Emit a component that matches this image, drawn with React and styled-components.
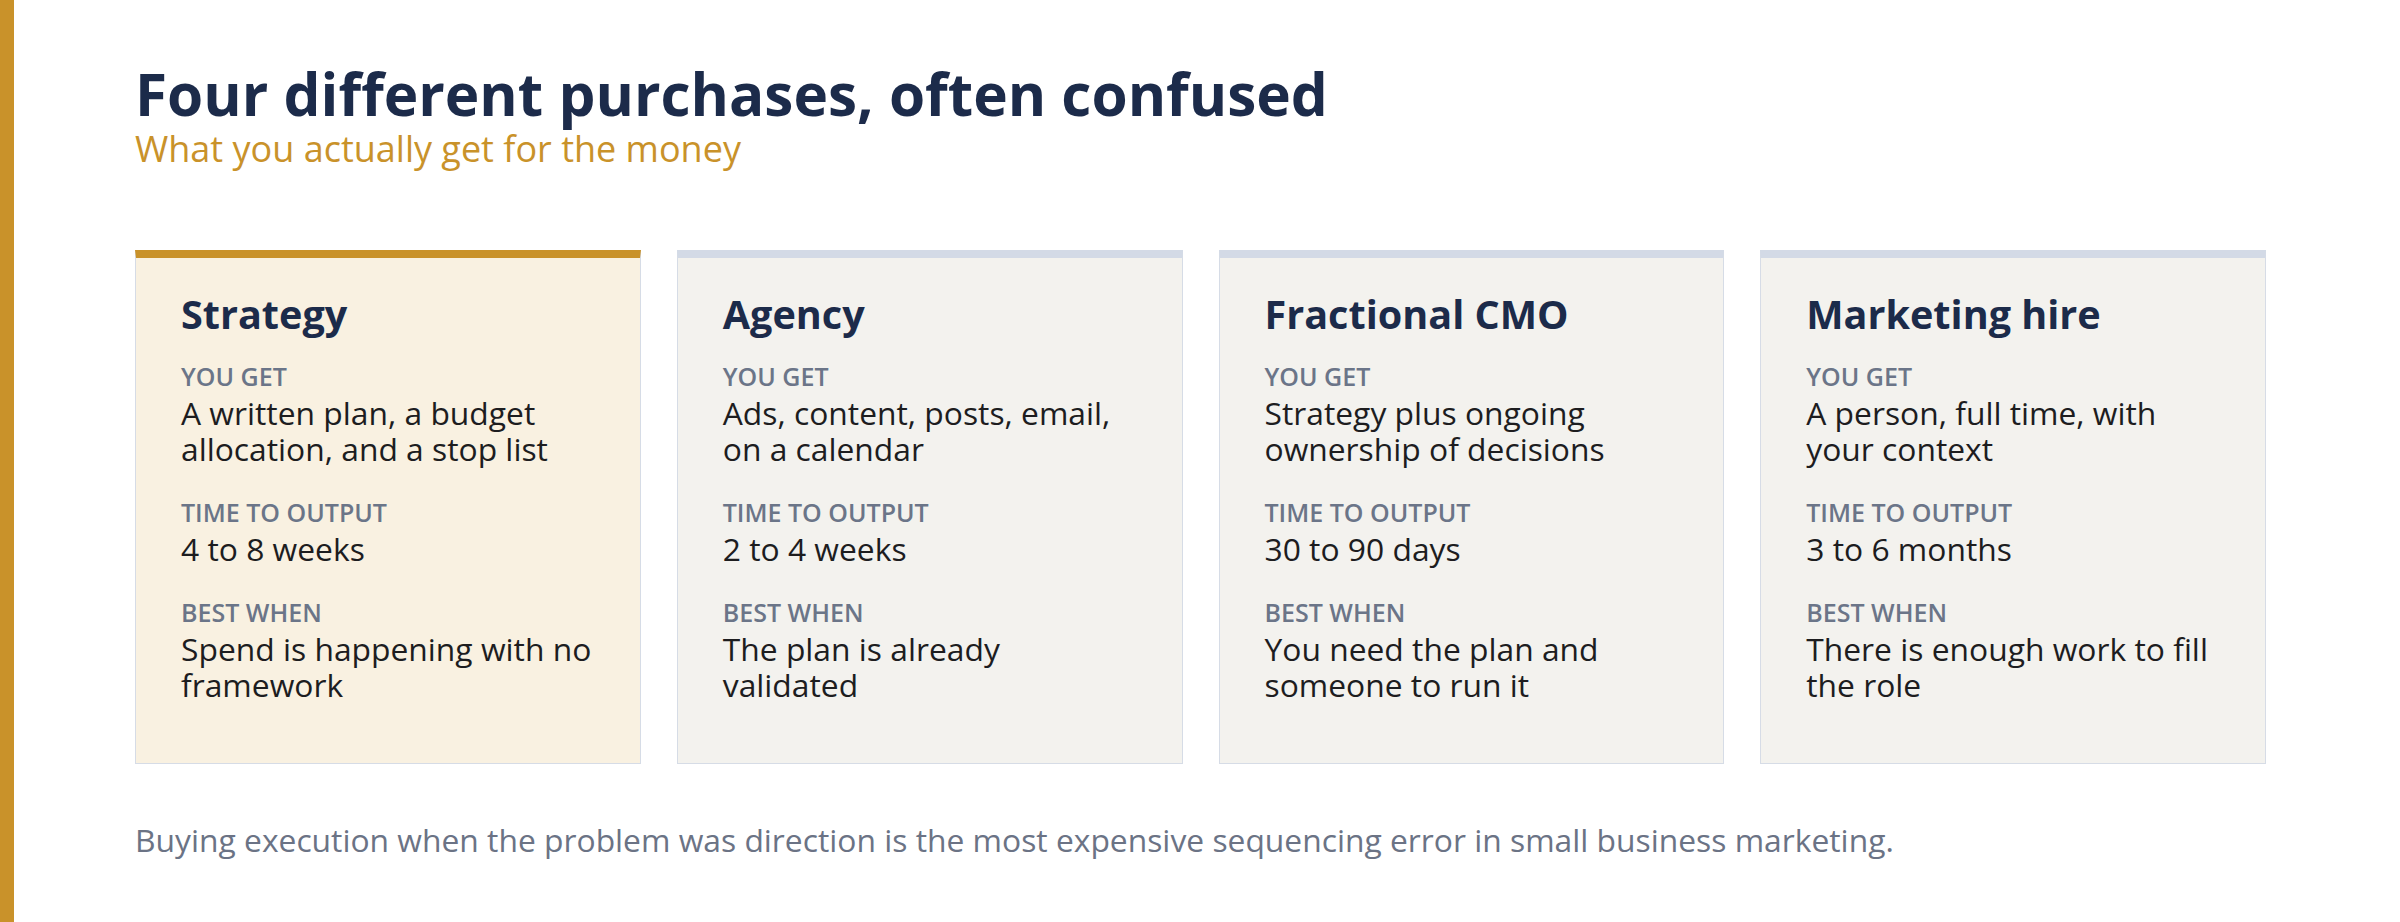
import React from "react";
import styled, { createGlobalStyle } from "styled-components";

const Global = createGlobalStyle`
  html, body { margin: 0; padding: 0; background: #ffffff; }
  body { font-family: "Open Sans", "Liberation Sans", sans-serif; }
  * { box-sizing: border-box; }
`;

const Page = styled.main`
  min-height: 922px;
  border-left: 14px solid #c9922a;
  padding: 58px 134px 0 121px;
  background: #ffffff;
`;

const Title = styled.h1`
  margin: 0;
  font-size: 58.5px;
  line-height: 70px;
  font-weight: 700;
  color: #1c2b4a;
`;

const Subtitle = styled.p`
  margin: 0;
  font-size: 36px;
  line-height: 42px;
  font-weight: 500;
  color: #c9922a;
`;

const Grid = styled.section`
  display: grid;
  grid-template-columns: repeat(4, 1fr);
  gap: 36px;
  margin-top: 80px;
`;

const Card = styled.article`
  background: ${(p) => (p.$featured ? "#f9f1e1" : "#f3f2ee")};
  border: 1px solid #d6dce6;
  border-top: 8px solid ${(p) => (p.$featured ? "#c9922a" : "#d3dae6")};
  padding: 32px 40px 60px 45px;
`;

const CardTitle = styled.h2`
  margin: 0 0 22px;
  font-size: 39.6px;
  line-height: 48px;
  font-weight: 700;
  color: #1c2b4a;
`;

const Section = styled.div`
  & + & { margin-top: 29px; }
`;

const Label = styled.div`
  font-size: 25px;
  line-height: 32px;
  font-weight: 600;
  color: #6b7588;
  text-transform: uppercase;
`;

const Value = styled.div`
  margin-top: 3px;
  font-size: 31.8px;
  line-height: 36px;
  font-weight: 400;
  color: #1d1d1f;
`;

const Footer = styled.p`
  margin: 55px 0 0;
  font-size: 31.8px;
  line-height: 42px;
  color: #6b7385;
`;

const cards = [
  {
    title: "Strategy",
    featured: true,
    get: "A written plan, a budget allocation, and a stop list",
    time: "4 to 8 weeks",
    best: "Spend is happening with no framework",
  },
  {
    title: "Agency",
    get: "Ads, content, posts, email, on a calendar",
    time: "2 to 4 weeks",
    best: "The plan is already validated",
  },
  {
    title: "Fractional CMO",
    get: "Strategy plus ongoing ownership of decisions",
    time: "30 to 90 days",
    best: "You need the plan and someone to run it",
  },
  {
    title: "Marketing hire",
    get: "A person, full time, with your context",
    time: "3 to 6 months",
    best: "There is enough work to fill the role",
  },
];

export default function App() {
  return (
    <>
      <Global />
      <Page>
        <Title>Four different purchases, often confused</Title>
        <Subtitle>What you actually get for the money</Subtitle>
        <Grid>
          {cards.map((c) => (
            <Card key={c.title} $featured={c.featured}>
              <CardTitle>{c.title}</CardTitle>
              <Section>
                <Label>You get</Label>
                <Value>{c.get}</Value>
              </Section>
              <Section>
                <Label>Time to output</Label>
                <Value>{c.time}</Value>
              </Section>
              <Section>
                <Label>Best when</Label>
                <Value>{c.best}</Value>
              </Section>
            </Card>
          ))}
        </Grid>
        <Footer>
          Buying execution when the problem was direction is the most expensive
          sequencing error in small business marketing.
        </Footer>
      </Page>
    </>
  );
}
